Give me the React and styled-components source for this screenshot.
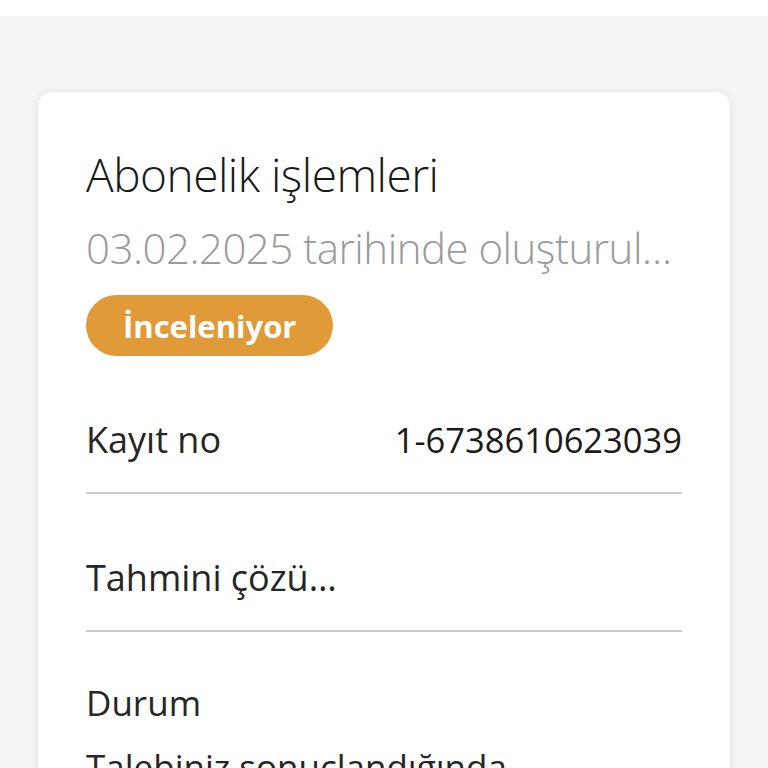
import React from "react";
import styled, { createGlobalStyle } from "styled-components";

const GlobalStyle = createGlobalStyle`
  html, body {
    margin: 0;
    padding: 0;
    background: #f5f5f5;
    font-family: "Open Sans", "Noto Sans", sans-serif;
    color: #1f1f1f;
  }
  * { box-sizing: border-box; }
`;

const Page = styled.div`
  height: 768px;
  overflow: hidden;
`;

const TopBar = styled.div`
  height: 16px;
  background: #ffffff;
`;

const Content = styled.div`
  padding: 76px 38px 0;
`;

const Card = styled.div`
  background: #ffffff;
  border-radius: 14px;
  box-shadow: 0 0 8px rgba(0, 0, 0, 0.08);
  padding: 52px 48px 0;
  min-height: 720px;
`;

const Title = styled.h2`
  margin: 0;
  font-size: 46px;
  font-weight: 300;
  line-height: 60px;
  color: #1a1a1a;
  letter-spacing: -0.5px;
`;

const Subtitle = styled.div`
  margin-top: 16px;
  margin-right: 10px;
  font-size: 42px;
  font-weight: 300;
  line-height: 56px;
  color: #9a9a9a;
  white-space: nowrap;
  overflow: hidden;
  text-overflow: ellipsis;
  letter-spacing: -0.5px;
`;

const Badge = styled.div`
  display: flex;
  align-items: center;
  justify-content: center;
  width: fit-content;
  margin-top: 19px;
  height: 61px;
  padding: 0 37px;
  border-radius: 31px;
  background: #e09a38;
  color: #ffffff;
  font-size: 31px;
  font-weight: 700;
`;

const Row = styled.div`
  display: flex;
  justify-content: space-between;
  align-items: center;
  padding: 60px 0 28px;
  border-bottom: 2px solid #cccccc;
  gap: 16px;
`;

const Label = styled.div`
  font-size: 36px;
  line-height: 48px;
  color: #262626;
  white-space: nowrap;
  overflow: hidden;
  text-overflow: ellipsis;
  max-width: ${(p) => p.$max || "none"};
`;

const Value = styled.div`
  font-size: 34.5px;
  line-height: 48px;
  color: #1a1a1a;
  white-space: nowrap;
`;

const Block = styled.div`
  padding-top: 39px;
`;

const Text = styled.div`
  font-size: 35px;
  line-height: 64px;
  color: #262626;
`;

export default function App() {
  return (
    <Page>
      <GlobalStyle />
      <TopBar />
      <Content>
        <Card>
          <Title>Abonelik işlemleri</Title>
          <Subtitle>03.02.2025 tarihinde oluşturuldu</Subtitle>
          <Badge>İnceleniyor</Badge>
          <Row>
            <Label>Kayıt no</Label>
            <Value>1-6738610623039</Value>
          </Row>
          <Row>
            <Label $max="272px">Tahmini çözüm tarihi</Label>
            <Value />
          </Row>
          <Block>
            <Text>Durum</Text>
            <Text>Talebiniz sonuçlandığında bilgilendirileceksiniz.</Text>
          </Block>
        </Card>
      </Content>
    </Page>
  );
}
